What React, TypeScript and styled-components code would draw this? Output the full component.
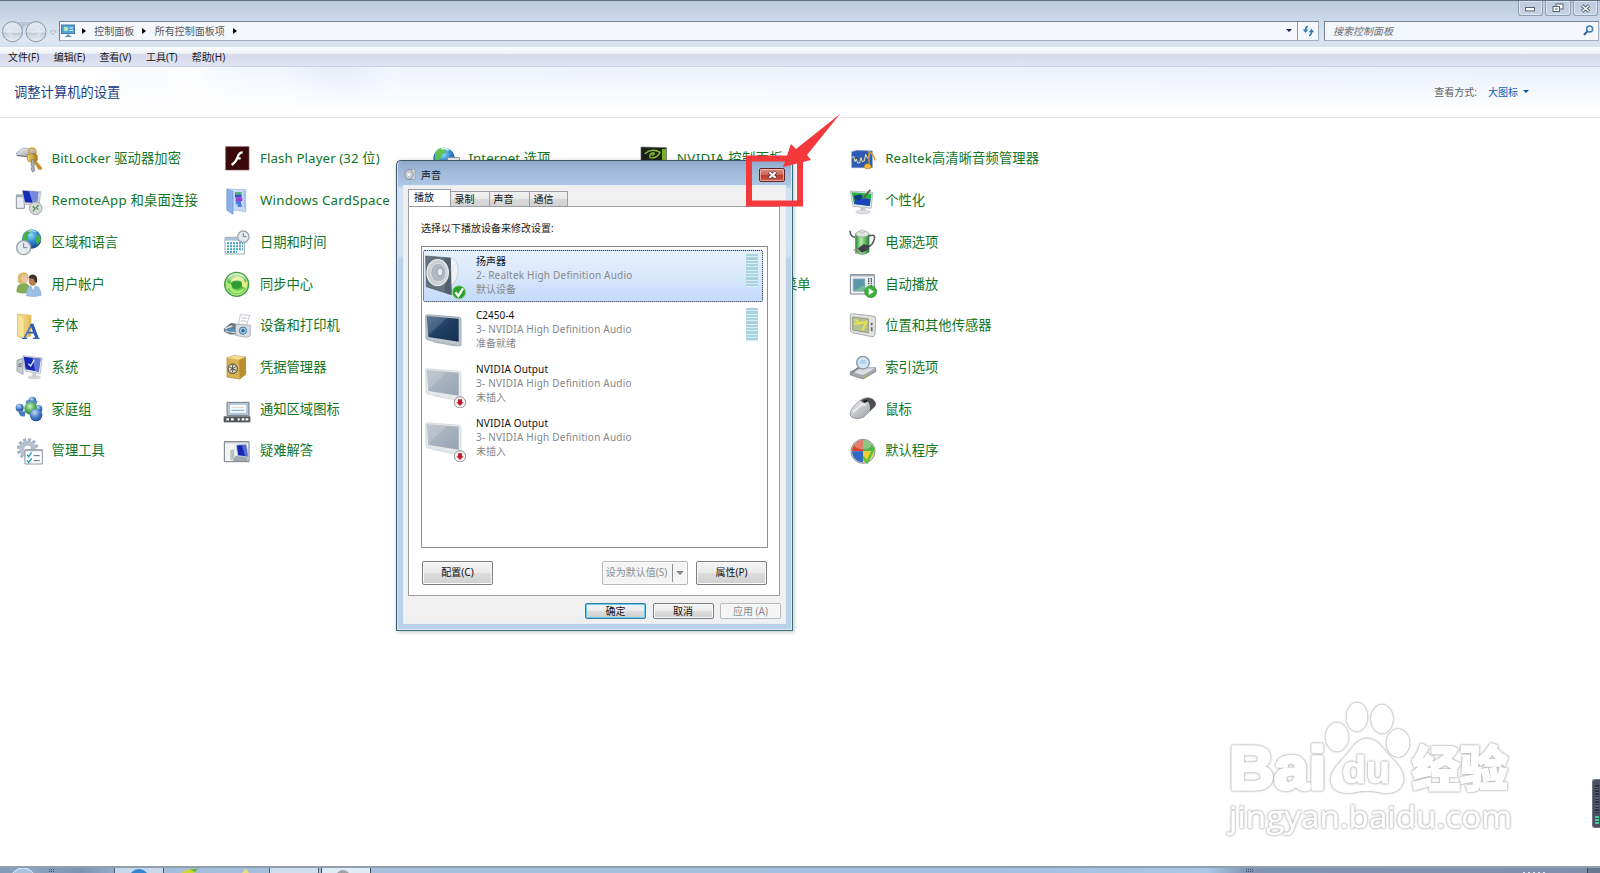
import React from "react";
import styled, { createGlobalStyle, css } from "styled-components";

const cjk = `"Noto Sans", "Noto Sans CJK SC", sans-serif`;

const Global = createGlobalStyle`
  * { box-sizing: border-box; }
  body { margin: 0; background: #fff; font-family: ${cjk}; overflow: hidden; }
`;

const Desktop = styled.div`
  position: relative;
  width: 1600px;
  height: 873px;
  display: flex;
  flex-direction: column;
  background: #fff;
  overflow: hidden;
`;

/* ---------- explorer frame ---------- */
const Frame = styled.div`
  height: 48px;
  border-top: 1px solid #62707f;
  border-bottom: 1px solid #fbfdff;
  background: linear-gradient(#bccbdd, #c5d3e4 25%, #d3dfee 55%, #dce6f2 85%, #d5e1ee 97%);
  display: flex;
  flex-direction: column;
`;
const Caption = styled.div`
  height: 20px;
  display: flex;
  justify-content: flex-end;
  padding-right: 2px;
  gap: 2px;
`;
const CaptionButton = styled.div`
  width: 25.5px;
  height: 15px;
  border: 1px solid #8d9db3;
  border-top: 0;
  border-radius: 0 0 3px 3px;
  box-shadow: inset 0 0 0 1px #dbe5f1;
  display: flex;
  align-items: center;
  justify-content: center;
`;
const AddressRow = styled.div`
  height: 20px;
  display: flex;
`;
const NavSlot = styled.div`
  width: 59px;
  height: 22px;
`;
const AddressBox = styled.div`
  width: 1260px;
  height: 20px;
  border: 1px solid #a3afbf;
  border-top-color: #76818f;
  border-left-color: #76818f;
  background: #f4f7fb;
  display: flex;
  align-items: center;
  font-size: 10px;
  color: #55585e;
  padding: 0 0 1px 1px;
`;
const Crumb = styled.span`
  margin: 0 8.3px 0 8.2px;
  line-height: 14px;
`;
const Arrow = styled.span<{ $first?: boolean }>`
  margin-left: ${(p) => (p.$first ? 7 : 0)}px;
  border-left: 4px solid #000;
  border-top: 3px solid transparent;
  border-bottom: 3px solid transparent;
`;
const DownArrow = styled.span<{ $c?: string; $w?: number }>`
  border-top: ${(p) => (p.$w ?? 3)}px solid ${(p) => p.$c ?? "#111"};
  border-left: ${(p) => (p.$w ?? 3)}px solid transparent;
  border-right: ${(p) => (p.$w ?? 3)}px solid transparent;
`;
const RefreshBox = styled.div`
  width: 21px;
  height: 18px;
  margin-left: 5px;
  border-left: 1px solid #8c98a8;
  display: flex;
  align-items: center;
  justify-content: center;
`;
const Filler = styled.div`
  flex: 1;
`;
const SearchBox = styled(AddressBox)`
  width: 275px;
  margin-left: 5px;
  padding: 0 4px 1px 8px;
  justify-content: space-between;
  font-style: italic;
  color: #6c6f76;
`;
const MenuBar = styled.div`
  height: 19px;
  display: flex;
  align-items: center;
  gap: 13.7px;
  padding-left: 8px;
  border-bottom: 1px solid #cbcfe2;
  background: linear-gradient(#fafbfe, #eef0f8 30%, #d7daeb 36%, #dfe3f2);
  font-size: 10px;
  color: #1a1a1a;
  line-height: 14px;
`;
const MenuItem = styled.span<{ $w: number }>`
  width: ${(p) => p.$w}px;
  white-space: nowrap;
`;
const Header = styled.div`
  height: 51px;
  display: flex;
  align-items: center;
  justify-content: space-between;
  padding: 0 71px 1px 14px;
  border-bottom: 1px solid #e4ebf0;
  background:
    linear-gradient(rgba(255,255,255,0), #fff 90%),
    linear-gradient(65deg, #fff 0 105px, #f7f9fe 135px 165px, #fcfdff 180px 195px, #f5f8fd 210px, #f2f5fd 240px 270px, #e9eefb 310px 340px, #f0f4fd 370px) no-repeat left / 400px 100%,
    linear-gradient(90deg, #f0f4fd, #eef2fc 30%, #eaf0fb);
`;
const Title = styled.div`
  font-size: 13.3px;
  line-height: 18px;
  color: #1b3f87;
`;
const ViewBy = styled.div`
  display: flex;
  align-items: center;
  font-size: 10px;
  line-height: 14px;
  color: #5d6066;
`;
const ViewLink = styled.span`
  color: #0b63b5;
  margin: 0 5px 0 11px;
`;

/* ---------- items grid ---------- */
const Items = styled.div`
  flex: 1;
  display: flex;
  padding: 20px 0 0 15px;
`;
const Column = styled.div`
  width: 208.4px;
  display: flex;
  flex-direction: column;
`;
const Item = styled.div`
  height: 41.72px;
  display: flex;
  align-items: center;
  gap: 8.6px;
  font-size: 13.3px;
  line-height: 18px;
  color: #11751f;
  white-space: nowrap;
  svg { flex: none; }
`;
const Label = styled.span<{ $s?: number }>`
  letter-spacing: ${(p) => p.$s ?? 0}px;
  padding-bottom: 1px;
`;
const Trailing = styled.span`
  margin-left: auto;
  padding: 0 38px 1px 0;
`;

/* ---------- dialog ---------- */
const Dialog = styled.div`
  position: absolute;
  left: 396px;
  top: 160px;
  width: 397px;
  height: 471px;
  border: 1px solid #3c5468;
  border-bottom-color: #35707a;
  border-right-color: #35707a;
  border-radius: 5px 5px 0 0;
  padding: 0 6px 6px;
  display: flex;
  flex-direction: column;
  background: linear-gradient(#94aed0, #a6c0df 3%, #aac4e2 5%, #d3e2f3 6%, #d0e0f2 20%, #b9d1e9 21%, #b9d1e9);
  box-shadow: inset 0 0 0 1px #dceaf6, 1px 1px 4px rgba(0,0,0,.25);
`;
const DialogTitle = styled.div`
  height: 24px;
  flex: none;
  display: flex;
  align-items: center;
  gap: 4px;
  margin: 0 -5px;
  padding: 3px 6px 0 6px;
  border-radius: 4px 4px 0 0;
  background: linear-gradient(#8fa9cb, #9fb9da 40%, #aec6e2);
  font-size: 10px;
  line-height: 14px;
  color: #111;
`;
const CloseButton = styled.div`
  width: 26px;
  height: 14px;
  margin-left: auto;
  border: 1px solid #5e262b;
  border-radius: 2px;
  box-shadow: inset 0 0 0 1px rgba(255,205,190,.65);
  background: linear-gradient(#dd8e83, #cf6558 48%, #b9382b 52%, #cc5f45);
  display: flex;
  align-items: center;
  justify-content: center;
`;
const Client = styled.div`
  flex: 1;
  background: #f0f0f0;
  border: 1px solid #e6eef6;
  display: flex;
  flex-direction: column;
  padding: 3px 5px 0 4px;
`;
const Tabs = styled.div`
  display: flex;
  align-items: flex-end;
  height: 17px;
`;
const Tab = styled.div<{ $active?: boolean; $w: number }>`
  width: ${(p) => p.$w}px;
  height: 15px;
  border: 1px solid #9a9da1;
  border-left-width: 0;
  border-bottom: 0;
  padding-left: 3.5px;
  font-size: 10px;
  line-height: 15px;
  color: #111;
  background: linear-gradient(#f1f1f1, #e8e8e8 50%, #d9d9d9 52%, #d3d3d3);
  ${(p) => p.$active && css`
    height: 18px;
    margin-bottom: -1px;
    padding-left: 5px;
    border-left-width: 1px;
    background: #fff;
  `}
`;
const Panel = styled.div`
  height: 390px;
  border: 1px solid #9b9fa3;
  background: #fff;
  padding: 14px 11px 0 12px;
`;
const Hint = styled.div`
  height: 25px;
  font-size: 10px;
  line-height: 15px;
  color: #222;
`;
const DeviceList = styled.div`
  height: 302px;
  width: 347px;
  border: 1px solid #8c9097;
  border-top-color: #83878e;
  padding: 2.5px 4px 0 1px;
`;
const Device = styled.div<{ $selected?: boolean }>`
  height: 52.2px;
  margin-bottom: 2px;
  border: 1px solid transparent;
  display: flex;
  padding: 3px 4px 0 1px;
  ${(p) => p.$selected && css`
    border: 1px dotted #1c2a40;
    border-radius: 2px;
    background: linear-gradient(#e7f1fd, #d9e8fb 50%, #c3dafb);
  `}
`;
const DeviceText = styled.div`
  margin-left: 9px;
  flex: 1;
  font-size: 10px;
  line-height: 14.2px;
  color: #85878a;
`;
const DeviceLine = styled.div<{ $s?: number; $strong?: boolean }>`
  letter-spacing: ${(p) => p.$s ?? 0}px;
  color: ${(p) => (p.$strong ? "#111" : "inherit")};
`;
const Meter = styled.div`
  width: 12px;
  height: 33px;
  background: repeating-linear-gradient(#a9d2e0 0 2.3px, #dcedf5 2.3px 3.35px);
`;
const PanelButtons = styled.div`
  display: flex;
  margin-top: 13px;
  padding: 0 1px;
`;
const ButtonGroup = styled.div`
  display: flex;
  gap: 8px;
`;
const Button = styled.div<{ $w: number; $h: number; $primary?: boolean; $disabled?: boolean }>`
  border: 1px solid #7b7d80;
  border-radius: 2px;
  background: linear-gradient(#f4f4f4, #ebebeb 48%, #dddddd 52%, #cfcfcf);
  box-shadow: inset 0 0 0 1px #fafafa;
  color: #111;
  font-size: 10px;
  line-height: 13px;
  display: flex;
  align-items: center;
  justify-content: center;
  white-space: nowrap;
  padding-bottom: ${(p) => (p.$h > 20 ? 1 : 0)}px;
  width: ${(p) => p.$w}px;
  height: ${(p) => p.$h}px;
  ${(p) => p.$primary && css`
    border-color: #3a7c9d;
    box-shadow: inset 0 0 0 1px #62cdf0;
  `}
  ${(p) => p.$disabled && css`
    border-color: #b5b7b9;
    background: #f4f4f4;
    color: #8b8d8f;
  `}
`;
const SplitRule = styled.span`
  width: 1px;
  height: 18px;
  background: #8f9193;
  margin: 0 3px 0 5px;
`;
const Footer = styled.div`
  display: flex;
  justify-content: flex-end;
  gap: 6.5px;
  padding: 7px 0 0;
  margin-right: -1px;
`;

/* ---------- overlays ---------- */
const Annotation = styled.svg`
  position: absolute;
  left: 740px;
  top: 106px;
`;
const NavOrbs = styled.svg`
  display: block;
`;
const Watermark = styled.svg`
  position: absolute;
  left: 1220px;
  top: 695px;
  g { filter: drop-shadow(0 0 .8px #aaa) drop-shadow(0 0 .7px #c4c4c4); }
`;
const SideGauge = styled.div`
  position: absolute;
  right: 0;
  top: 779px;
  width: 8px;
  height: 49px;
  border-radius: 3px 0 0 3px;
  background: #4c4f60;
  border: 1px solid #6f7284;
  border-right: 0;
  padding: 5px 1px 3px 2px;
  display: flex;
  flex-direction: column;
  justify-content: space-between;
`;
const GaugeTop = styled.div`
  height: 28px;
  background: repeating-linear-gradient(#2f3240 0 1.5px, #5b5e70 1.5px 2.7px);
`;
const GaugeLit = styled.div`
  height: 8px;
  background: repeating-linear-gradient(#4fc79c 0 2px, #3c5a5c 2px 3px);
`;

/* ---------- taskbar ---------- */
const Taskbar = styled.div`
  height: 7px;
  border-top: 2px solid #929fac;
  background: linear-gradient(90deg, #8299b8 0, #8aa3c2 2%, #7d95b4 5%, #a3bddc 9%, #a6c0de 24%, #a3bfe0 60%, #a9c8e8 75.5%, #7f94b2 78%, #7d8fa9 100%);
`;
const TaskSvg = styled.svg`
  display: block;
`;

type IconProps = { children: React.ReactNode };
const Ico = ({ children }: IconProps) => (
  <svg width="28" height="28" viewBox="0 0 84 84" fill="none">{children}</svg>
);

const GradientSheet = styled.svg`
  position: absolute;
`;

const Defs = () => (
  <GradientSheet width="0" height="0">
    <defs>
      <radialGradient id="globe" cx=".45" cy=".3" r=".75"><stop offset="0" stopColor="#8fdcf5" /><stop offset=".5" stopColor="#2b84cf" /><stop offset="1" stopColor="#123a80" /></radialGradient>
      <radialGradient id="ballBlue" cx=".4" cy=".3" r=".8"><stop offset="0" stopColor="#c3dcf6" /><stop offset=".5" stopColor="#4a7ec8" /><stop offset="1" stopColor="#173c8e" /></radialGradient>
      <radialGradient id="ballGreen" cx=".45" cy=".35" r=".7"><stop offset="0" stopColor="#c9efc4" /><stop offset=".6" stopColor="#49a94c" /><stop offset="1" stopColor="#237a2b" /></radialGradient>
      <linearGradient id="gold" x1="0" x2="1"><stop offset="0" stopColor="#f3d878" /><stop offset="1" stopColor="#a9781b" /></linearGradient>
      <linearGradient id="silver" x1="0" y1="0" x2="1" y2="1"><stop offset="0" stopColor="#f7f8f9" /><stop offset="1" stopColor="#8b9097" /></linearGradient>
      <linearGradient id="folder" x1="0" x2="1"><stop offset="0" stopColor="#fbeeb5" /><stop offset="1" stopColor="#e0b84e" /></linearGradient>
      <linearGradient id="greenCyl" x1="0" x2="1"><stop offset="0" stopColor="#2f8f36" /><stop offset=".4" stopColor="#b5ecab" /><stop offset="1" stopColor="#23842f" /></linearGradient>
      <linearGradient id="sync" x1="0" y1="0" x2="0" y2="1"><stop offset="0" stopColor="#b9e8a2" /><stop offset=".5" stopColor="#4db53e" /><stop offset="1" stopColor="#86de55" /></linearGradient>
      <linearGradient id="tv" x1="0" y1="0" x2="1" y2="1"><stop offset="0" stopColor="#4b6a8d" /><stop offset=".5" stopColor="#1f3d62" /><stop offset="1" stopColor="#15304f" /></linearGradient>
      <linearGradient id="tvOff" x1="0" y1="0" x2="1" y2="1"><stop offset="0" stopColor="#b7c0cb" /><stop offset="1" stopColor="#96a3b3" /></linearGradient>
      <linearGradient id="orb" x1="0" y1="0" x2="0" y2="1"><stop offset="0" stopColor="#e6ebf1" /><stop offset=".5" stopColor="#d9e0e8" /><stop offset=".58" stopColor="#c3ccd6" /><stop offset="1" stopColor="#edf2f6" /></linearGradient>
    </defs>
  </GradientSheet>
);

const Clock = ({ x, y, r }: { x: number; y: number; r: number }) => (
  <g>
    <circle cx={x} cy={y} r={r} fill="#e6ebf1" stroke="#9aa3ae" strokeWidth="4" />
    <path d={`M${x} ${y - r * 0.65}V${y}H${x + r * 0.5}`} stroke="#5d6b7d" strokeWidth="2.5" />
  </g>
);

const icons: Record<string, React.ReactNode> = {
  bitlocker: <Ico>
    <path d="M4 24 24 9 60 12 64 24 40 36 6 32Z" fill="url(#silver)" stroke="#969ca3" strokeWidth="2" />
    <path d="M6 31 38 35 62 24" stroke="#6f757c" strokeWidth="3" />
    <path d="M42 30V18q0-9 9-9t11 9v12" stroke="#d5a52e" strokeWidth="5" />
    <path d="M36 30q12-8 30 0l1 16q-12 10-28 2z" fill="url(#gold)" stroke="#9b741c" strokeWidth="2" />
    <path d="M60 44 82 70 76 74 70 72 56 50Z" fill="#c28f24" stroke="#8f6915" />
    <path d="M50 42 57 46 58 78 52 80 48 72 51 66 48 58Z" fill="#a9afb7" stroke="#6e747c" strokeWidth="2" />
  </Ico>,
  remote: <Ico>
    <path d="M4 24H28V64H4Z" fill="#e9edf1" stroke="#8b939c" strokeWidth="3" /><path d="M6 28H28" stroke="#96a9c4" strokeWidth="5" />
    <path d="M22 10 78 14 72 54 28 52Z" fill="#ced4da" stroke="#aab1b9" strokeWidth="2" />
    <path d="M23 11 70 15 66 48 30 46Z" fill="#1428b4" /><path d="M42 12 70 15 66 46 52 45Z" fill="#8ea4ea" opacity=".8" />
    <circle cx="62" cy="64" r="19" fill="#d7dbd9" stroke="#a3a8a7" strokeWidth="3" />
    <path d="M53 58 60 65 54 73M71 54 64 61 70 68" stroke="#4f8f56" strokeWidth="4" />
  </Ico>,
  region: <Ico>
    <circle cx="50" cy="33" r="29" fill="url(#globe)" />
    <path d="M24 22Q34 6 48 5L44 16 38 20 40 32 34 42 22 36ZM64 24 74 20 78 36 68 50 62 42Z" fill="#46ae4b" />
    <path d="M38 10q14-5 26 2" stroke="#d6f5fb" strokeWidth="4" opacity=".7" />
    <Clock x={26} y={59} r={21} />
  </Ico>,
  users: <Ico>
    <path d="M5 66Q4 40 26 40T44 66Q24 74 5 66Z" fill="#85ad55" stroke="#6b9141" />
    <path d="M8 34Q6 8 26 7 42 8 40 26L34 40H12Z" fill="#d8b767" /><ellipse cx="28" cy="26" rx="9" ry="12" fill="#eac5a1" />
    <path d="M34 77Q33 46 55 46T79 76Q56 84 34 77Z" fill="#9cbfe6" stroke="#7398c4" /><path d="M48 46 55 60 60 46Z" fill="#fff" />
    <ellipse cx="53" cy="32" rx="12" ry="15" fill="#b67d56" /><path d="M40 24Q46 10 60 15 69 22 66 38L60 36 56 26Z" fill="#373333" />
  </Ico>,
  fonts: <Ico>
    <path d="M8 6 48 10V72L24 79 8 72Z" fill="url(#folder)" stroke="#d9bb61" strokeWidth="2" /><path d="M8 6 28 18V80L8 72Z" fill="#f6e299" stroke="#dabb63" strokeWidth="2" />
    <path d="M28 78 50 36" stroke="#4d7ac9" strokeWidth="5" /><path d="M50 36 66 78" stroke="#2d59b0" strokeWidth="10" /><path d="M38 62H60" stroke="#315fb8" strokeWidth="5" /><path d="M22 79H36M54 79H74" stroke="#315fb8" strokeWidth="4" />
  </Ico>,
  system: <Ico>
    <path d="M6 22 24 16V64L6 54Z" fill="#c8cdd2" stroke="#777e86" strokeWidth="2" /><path d="M10 34 20 32M10 40 20 39" stroke="#4f575f" strokeWidth="3" />
    <path d="M24 8 82 15 76 62 30 54Z" fill="#e2e6ea" stroke="#a5acb3" strokeWidth="2" /><path d="M26 11 77 17 71 56 32 49Z" fill="#1526b0" /><path d="M52 14 77 17 71 56 60 54Z" fill="#7d95e2" opacity=".7" />
    <path d="M40 32 47 39 58 20" stroke="#dfe9ff" strokeWidth="4" /><ellipse cx="58" cy="73" rx="19" ry="5" fill="#d5d9dd" stroke="#a5aab0" /><path d="M52 60 64 62 62 72H54Z" fill="#c4c9ce" />
  </Ico>,
  homegroup: <Ico>
    <circle cx="52" cy="17" r="12" fill="url(#ballBlue)" /><path d="M36 16Q30 20 34 32L62 34 68 18Z" fill="#5687cd" />
    <circle cx="14" cy="38" r="12" fill="url(#ballBlue)" /><path d="M10 50Q14 68 30 64L32 48Z" fill="#4a7ac2" />
    <circle cx="70" cy="42" r="12" fill="url(#ballBlue)" /><circle cx="47" cy="40" r="19" fill="url(#ballGreen)" /><circle cx="63" cy="60" r="19" fill="url(#ballBlue)" />
  </Ico>,
  admin: <Ico>
    <circle cx="38" cy="36" r="28" stroke="#a1afbf" strokeWidth="9" strokeDasharray="9 5.66" /><circle cx="38" cy="36" r="19" fill="#dfe5eb" stroke="#b5c1ce" strokeWidth="12" />
    <circle cx="38" cy="36" r="12" fill="#fff" stroke="#8996a5" strokeWidth="2" />
    <path d="M30 38H82V81H30Z" fill="#fbfcfd" stroke="#9097a0" strokeWidth="3" /><path d="M31 40H81" stroke="#a7adb5" strokeWidth="5" />
    <path d="M36 53 41 59 50 46M36 70 41 76 50 64" stroke="#2498c0" strokeWidth="4" /><path d="M56 56H74M56 71H74" stroke="#626b76" strokeWidth="3" />
  </Ico>,
  flash: <Ico>
    <path d="M8 5H78V75H8Z" fill="#3b0709" stroke="#7c5a5c" strokeWidth="2" />
    <path d="M59 22Q48 22 44 36T26 60M40 40H53" stroke="#fff" strokeWidth="7" />
  </Ico>,
  cardspace: <Ico>
    <path d="M12 6 68 8V74L12 66Z" fill="#c5dcf5" stroke="#8db0dc" strokeWidth="2" /><path d="M30 12 60 13V66L34 64Z" fill="#c9dcf7" />
    <path d="M36 18H56" stroke="#39b054" strokeWidth="5" /><path d="M36 22H56V32H36Z" fill="#3d4ec2" /><path d="M38 32H58V42H38Z" fill="#9a3fd0" /><path d="M38 42H54V52H38ZM44 52H56V60H44Z" fill="#4b7be0" />
    <path d="M12 6 30 14V82L12 70Z" fill="#8bb1eb" stroke="#6590d4" strokeWidth="2" /><path d="M68 8 62 12V60L68 74Z" fill="#a4c3ef" />
  </Ico>,
  datetime: <Ico>
    <path d="M6 28H64V78H6Z" fill="#fff" stroke="#9ba6b3" strokeWidth="3" /><path d="M7 30H63V38H7Z" fill="#a9c3d8" />
    <path d="M12 46H60M12 55H60M12 64H60M12 72H42" stroke="#46a3b9" strokeWidth="6" strokeDasharray="6 3" /><Clock x={61} y={26} r={17} />
  </Ico>,
  sync: <Ico>
    <circle cx="41" cy="43" r="36" fill="url(#sync)" stroke="#4a9c44" strokeWidth="4" /><circle cx="41" cy="43" r="32" stroke="#d6f5c4" strokeWidth="2" />
    <path d="M22 38Q26 20 44 20 62 22 66 38L74 34 70 56 52 46 58 40Q52 30 42 30 30 30 22 38Z" fill="#e4ef8a" /><path d="M66 52Q60 70 42 70 24 70 18 54L10 58 10 36 30 46 26 52Q32 62 42 62 58 62 66 52Z" fill="#bdee84" opacity=".85" />
    <ellipse cx="41" cy="44" rx="16" ry="12" fill="#2f9c35" />
    <ellipse cx="41" cy="22" rx="25" ry="12" fill="#fff" opacity=".3" />
  </Ico>,
  printers: <Ico>
    <path d="M52 8 80 10 70 42 46 40Z" fill="#fdfdfd" stroke="#a6adb6" strokeWidth="2" /><path d="M56 18 72 19M54 26 70 28" stroke="#bfc6cf" strokeWidth="3" />
    <path d="M4 50 24 34 46 38V66L20 66 4 58Z" fill="#6f7a85" stroke="#515b65" strokeWidth="2" /><path d="M6 50 28 42M8 57 36 62" stroke="#dde4ea" strokeWidth="4" /><ellipse cx="24" cy="54" rx="13" ry="5" fill="#4e91bd" />
    <path d="M38 36 82 40V72L68 76 38 70Z" fill="#d9dfe6" stroke="#8f98a3" strokeWidth="2" /><circle cx="60" cy="56" r="11" fill="#a1cbe6" stroke="#56758e" strokeWidth="3" /><circle cx="60" cy="56" r="5" fill="#24669b" />
  </Ico>,
  credentials: <Ico>
    <path d="M12 14 34 8 68 12V64L50 78 12 72Z" fill="#d9b352" stroke="#a5802b" strokeWidth="2" /><path d="M12 14 48 20 68 12 34 8Z" fill="#f5df95" /><path d="M48 20 68 12V64L50 78Z" fill="#b98e31" />
    <circle cx="29" cy="47" r="14" fill="#dcdcd6" stroke="#6b6248" strokeWidth="4" /><path d="M29 36V58M19 42 39 52M20 53 38 41" stroke="#57523f" strokeWidth="3" />
  </Ico>,
  notify: <Ico>
    <path d="M12 22H78V62H12Z" fill="#b9c4cf" stroke="#727d88" strokeWidth="3" /><path d="M20 28H71V55H20Z" fill="#f7fbfe" stroke="#92b2d1" strokeWidth="2" /><path d="M26 37H64" stroke="#d9bcae" strokeWidth="2" /><path d="M26 46H64" stroke="#6aa4d8" strokeWidth="3" />
    <path d="M2 64H82V82H2Z" fill="#4d5359" /><path d="M10 73H18M24 73H32M44 73H50M56 73H64M68 73H76" stroke="#fff" strokeWidth="7" />
  </Ico>,
  trouble: <Ico>
    <path d="M4 14H78V74H4Z" fill="#f2f4f6" stroke="#737a82" strokeWidth="3" /><path d="M6 17H76" stroke="#c0c6cc" strokeWidth="4" /><path d="M22 40 34 36V68H22Z" fill="#b9c3be" /><path d="M38 56 74 60V72H30L32 66Z" fill="#9fa9b4" />
    <path d="M40 24 70 22 76 60 44 56Z" fill="#1526b0" stroke="#c1cad5" strokeWidth="3" /><path d="M56 23 70 22 76 60 66 58Z" fill="#7d95e2" opacity=".6" />
  </Ico>,
  internet: <Ico>
    <circle cx="36" cy="40" r="32" fill="url(#globe)" /><path d="M10 22Q22 4 40 10L42 22 30 30 20 50 8 44Z" fill="#63c052" /><path d="M28 12q12-5 22 4" stroke="#d6f5fb" strokeWidth="5" /><path d="M46 38H82V70H46Z" fill="#f3f5f7" stroke="#868d95" strokeWidth="3" />
  </Ico>,
  nvidia: <Ico>
    <path d="M3 6 79 8V80H3Z" fill="#1d211b" stroke="#596052" strokeWidth="2" /><path d="M66 12H78V70H66Z" fill="#7aaf1f" /><path d="M14 26Q36 8 60 22 50 42 30 38 26 24 42 24 44 32 34 30" stroke="#8cc529" strokeWidth="4" />
  </Ico>,
  realtek: <Ico>
    <path d="M8 20 24 16 70 18V68H8Z" fill="#2e59b5" stroke="#8398c9" strokeWidth="2" /><path d="M8 38 14 34 18 50 22 42 26 54 32 54 36 38 40 50 46 48 50 28 56 40 64 26" stroke="#f0e58d" strokeWidth="3" />
    <path d="M60 62V20Q74 26 78 46" stroke="#d99a24" strokeWidth="4" /><ellipse cx="56" cy="64" rx="10" ry="8" fill="#f4c034" stroke="#af7816" strokeWidth="2" />
  </Ico>,
  personal: <Ico>
    <path d="M4 12 72 16 66 64 12 58Z" fill="#e1e5e9" stroke="#9ca4ac" strokeWidth="2" /><path d="M8 16 68 20 62 57 15 51Z" fill="#2ab548" /><path d="M18 40 44 34 64 36 62 57 15 51Z" fill="#1c42c0" /><path d="M14 26 34 22 42 28 34 40 18 40Z" fill="#123b82" />
    <path d="M44 32 64 8" stroke="#4e5f34" strokeWidth="5" /><path d="M34 60 50 61 48 72H36Z" fill="#c3c8cd" /><ellipse cx="42" cy="75" rx="22" ry="6" fill="#dce0e4" stroke="#a5abb1" />
  </Ico>,
  power: <Ico>
    <path d="M20 18V72Q40 86 60 72V18Z" fill="url(#greenCyl)" stroke="#2d7e33" strokeWidth="2" /><ellipse cx="40" cy="18" rx="20" ry="9" fill="#dfe6df" stroke="#8b9a8b" strokeWidth="2" /><ellipse cx="40" cy="10" rx="8" ry="5" fill="#d5dbd8" stroke="#92998f" />
    <path d="M3 8Q4 26 18 28M60 24Q82 16 75 36 70 54 56 56" stroke="#4e565b" strokeWidth="4.5" /><path d="M26 62 44 48 62 54 56 66 38 74Z" fill="#3f4145" /><path d="M28 64 14 66M32 71 18 76" stroke="#94937b" strokeWidth="4" />
  </Ico>,
  autoplay: <Ico>
    <path d="M4 14H76V72H4Z" fill="#eef1f4" stroke="#7c848c" strokeWidth="3" /><path d="M4 17H76" stroke="#a2adb8" strokeWidth="4" /><path d="M12 26H48V64H12Z" fill="#5a97a9" stroke="#c4ced8" strokeWidth="2" /><path d="M12 62 48 44V64H12Z" fill="#73b69b" /><path d="M67 24V50M59 24V44" stroke="#4f565e" strokeWidth="4" strokeDasharray="5 2" />
    <circle cx="65" cy="65" r="18" fill="#3fae3b" stroke="#2c8a31" strokeWidth="2" /><path d="M59 55 75 65 59 75Z" fill="#fff" />
  </Ico>,
  location: <Ico>
    <path d="M4 10Q4 5 10 5L72 12Q80 13 80 20L78 68Q76 76 68 74L10 62Q4 60 4 54Z" fill="#dfe1df" stroke="#888b88" strokeWidth="2" /><path d="M11 15 58 21V62L11 54Z" fill="#b4c291" stroke="#737b6c" strokeWidth="2" /><path d="M16 36 52 30 40 56M18 22 30 32" stroke="#ebe245" strokeWidth="6" /><path d="M68 32V40M68 46V58" stroke="#666967" strokeWidth="5" />
  </Ico>,
  indexing: <Ico>
    <path d="M4 56 28 46 80 44V56L42 78 4 66Z" fill="#a4a9af" stroke="#70767d" strokeWidth="2" /><path d="M6 56 42 66 78 46 40 46Z" fill="#dcdfe2" /><path d="M44 72 50 68" stroke="#c7b833" strokeWidth="5" />
    <path d="M28 44 8 60" stroke="#80868e" strokeWidth="6" /><circle cx="42" cy="29" r="19" fill="#d2e7fa" stroke="#8a929b" strokeWidth="4" /><path d="M32 30H52M34 24H50" stroke="#8fbbe6" strokeWidth="3" />
  </Ico>,
  mouse: <Ico>
    <path d="M4 52Q8 36 32 17 52 2 70 12 84 22 78 34L44 66Q24 76 8 66 1 60 4 52Z" fill="url(#silver)" stroke="#777b80" strokeWidth="2" /><path d="M34 17Q52 4 70 12 84 22 78 34L62 48Q66 28 56 20L46 24Z" fill="#4b4e52" /><path d="M44 20 54 16" stroke="#17191c" strokeWidth="6" /><path d="M12 52 38 28 50 30" stroke="#fff" strokeWidth="6" opacity=".6" />
  </Ico>,
  defaults: <Ico>
    <circle cx="42" cy="43" r="36" fill="#d7dcdf" stroke="#8b9094" strokeWidth="3" /><path d="M42 43V10A33 33 0 0 0 9 43Z" fill="#d9442e" /><path d="M42 43V10A33 33 0 0 1 75 43Z" fill="#57b14a" /><path d="M42 43H9A33 33 0 0 0 42 76Z" fill="#2f69c4" /><path d="M42 43H75A33 33 0 0 1 42 76Z" fill="#f0cc32" /><ellipse cx="42" cy="24" rx="26" ry="13" fill="#fff" opacity=".3" />
    <path d="M42 60 54 76 76 32" stroke="#58c23c" strokeWidth="7" />
  </Ico>,
};

type Entry = [icon: string, label: string, spacing?: number];
const columns: Entry[][] = [
  [["bitlocker", "BitLocker 驱动器加密", 0.08], ["remote", "RemoteApp 和桌面连接", 0.2], ["region", "区域和语言"], ["users", "用户帐户"], ["fonts", "字体"], ["system", "系统"], ["homegroup", "家庭组"], ["admin", "管理工具"]],
  [["flash", "Flash Player (32 位)", 0.1], ["cardspace", "Windows CardSpace", 0.22], ["datetime", "日期和时间"], ["sync", "同步中心"], ["printers", "设备和打印机"], ["credentials", "凭据管理器"], ["notify", "通知区域图标"], ["trouble", "疑难解答"]],
  [["internet", "Internet 选项", 0.1]],
  [["nvidia", "NVIDIA 控制面板", 0.4], ["", ""], ["", ""], ["", "菜单"]],
  [["realtek", "Realtek高清晰音频管理器", 0.1], ["personal", "个性化"], ["power", "电源选项"], ["autoplay", "自动播放"], ["location", "位置和其他传感器"], ["indexing", "索引选项"], ["mouse", "鼠标"], ["defaults", "默认程序"]],
];

const Tv = ({ off }: { off?: boolean }) => (
  <svg width="42" height="46" viewBox="0 0 126 138" fill="none">
    <path d="M2 24Q2 20 8 20L104 28Q108 28 108 36V112L100 114 10 96Q4 96 3 90Z" fill={off ? "#e6e9ec" : "#bfc6cd"} stroke={off ? "#ccd1d6" : "#8d969f"} strokeWidth="2" />
    <path d="M5 24 101 32V101L10 87Z" fill={off ? "url(#tvOff)" : "url(#tv)"} />
    <path d="M5 24 66 29 12 80 8 80Z" fill="#fff" opacity={off ? 0.15 : 0.12} />
    <path d="M24 100 92 113" stroke={off ? "#dde1e5" : "#aeb6be"} strokeWidth="5" />
    {off && <><circle cx="105" cy="121" r="17" fill="#f2f2f2" stroke="#8f9194" strokeWidth="3" /><path d="M105 132 94 121H99V112H111V121H116Z" fill="#c01e2b" /></>}
  </svg>
);

const Speaker = () => (
  <svg width="42" height="46" viewBox="0 0 126 138" fill="none">
    <path d="M76 10Q100 18 99 50T76 96Z" fill="#eef2f6" stroke="#bcc6d0" strokeWidth="2" />
    <path d="M2 6 76 12 79 122 4 98Z" fill="#66727e" stroke="#4d5964" strokeWidth="2" />
    <path d="M58 11 76 12 79 122 60 116Z" fill="#50606e" />
    <ellipse cx="38" cy="56" rx="32" ry="39" fill="#c9ced3" stroke="#e8ebee" strokeWidth="4" /><ellipse cx="40" cy="56" rx="23" ry="28" fill="#b0b7be" stroke="#dfe3e6" strokeWidth="3" /><ellipse cx="45" cy="54" rx="9" ry="12" fill="#e6e9eb" stroke="#7f8993" strokeWidth="2" />
    <circle cx="102" cy="115" r="20" fill="#2aa12a" stroke="#9bd595" strokeWidth="3" /><path d="M91 115 100 126 114 103" stroke="#fff" strokeWidth="7" />
  </svg>
);

const devices = [
  { name: "扬声器", sub: "2- Realtek High Definition Audio", state: "默认设备", icon: <Speaker />, meter: true, selected: true },
  { name: "C2450-4", sub: "3- NVIDIA High Definition Audio", state: "准备就绪", icon: <Tv />, meter: true },
  { name: "NVIDIA Output", sub: "3- NVIDIA High Definition Audio", state: "未插入", icon: <Tv off /> },
  { name: "NVIDIA Output", sub: "3- NVIDIA High Definition Audio", state: "未插入", icon: <Tv off /> },
];

export default function App() {
  return (
    <Desktop>
      <Global />
      <Defs />
      <Frame>
        <Caption>
          <CaptionButton><svg width="10" height="8"><rect x=".5" y="3.5" width="9" height="3.4" fill="#fff" stroke="#596473" /></svg></CaptionButton>
          <CaptionButton><svg width="12" height="10" fill="#f7f9fb" stroke="#596473"><rect x="4" y="1" width="7" height="5" /><rect x="1" y="3.5" width="6.5" height="5" /><path d="M3 6H5.5" /></svg></CaptionButton>
          <CaptionButton><svg width="11" height="9"><path d="M2 1.5 9 7.5M9 1.5 2 7.5" stroke="#596473" strokeWidth="3.6" /><path d="M2.3 1.8 8.7 7.2M8.7 1.8 2.3 7.2" stroke="#fff" strokeWidth="1.5" /></svg></CaptionButton>
        </Caption>
        <AddressRow>
          <NavSlot>
            <NavOrbs width="59" height="22" fill="none">
              <path d="M13 1H36V5Q24 3 22 8Z" fill="#b8c5d3" />
              <circle cx="12.5" cy="10.7" r="10" fill="url(#orb)" stroke="#8996a5" /><circle cx="36" cy="10.7" r="10" fill="url(#orb)" stroke="#8996a5" />
              <path d="M18 11H8M12 7 8 11 12 15M31 11H41M37 7 41 11 37 15" stroke="#f4f7fa" strokeWidth="2" opacity=".45" />
              <path d="M50 10H56L53 13.5Z" fill="#f2f5f9" stroke="#a9b6c4" />
            </NavOrbs>
          </NavSlot>
          <AddressBox>
            <svg width="14" height="14" fill="none"><rect x=".5" y="1" width="13" height="8.5" fill="#4ba3d9" stroke="#4b7da8" /><circle cx="5" cy="5" r="2.3" fill="#bfe3b5" /><path d="M8.5 4H12M8.5 6.5H12" stroke="#e8f6ff" /><path d="M4 13 7 10 11 13Z" fill="#6694bb" /></svg>
            <Arrow $first /><Crumb>控制面板</Crumb><Arrow /><Crumb>所有控制面板项</Crumb><Arrow />
            <Filler />
            <DownArrow $c="#15204a" />
            <RefreshBox>
              <svg width="13" height="12" fill="none"><path d="M6 1.5Q3.5 1.5 3.5 6M7 10.5Q9.5 10.5 9.5 6" stroke="#2f7abf" strokeWidth="1.6" /><path d="M.8 4.6H6.2L3.5 8ZM6.8 7.2H12.2L9.5 3.8Z" fill="#2f7abf" /></svg>
            </RefreshBox>
          </AddressBox>
          <SearchBox>
            <span>搜索控制面板</span>
            <svg width="11" height="11" fill="none"><circle cx="6.6" cy="4" r="3" stroke="#3f7bb0" strokeWidth="1.6" /><path d="M4.3 6.4 1 10" stroke="#35608f" strokeWidth="2" /></svg>
          </SearchBox>
        </AddressRow>
      </Frame>
      <MenuBar>
        <MenuItem $w={32}>文件(F)</MenuItem><MenuItem $w={32}>编辑(E)</MenuItem><MenuItem $w={33}>查看(V)</MenuItem><MenuItem $w={32}>工具(T)</MenuItem><MenuItem $w={34}>帮助(H)</MenuItem>
      </MenuBar>
      <Header>
        <Title>调整计算机的设置</Title>
        <ViewBy>查看方式:<ViewLink>大图标</ViewLink><DownArrow $c="#0b4f9b" /></ViewBy>
      </Header>
      <Items>
        {columns.map((col, i) => (
          <Column key={i}>
            {col.map(([icon, label, spacing], j) =>
              icon ? (
                <Item key={j}>{icons[icon]}<Label $s={spacing}>{label}</Label></Item>
              ) : (
                <Item key={j}>{label && <Trailing>{label}</Trailing>}</Item>
              )
            )}
          </Column>
        ))}
      </Items>
      <Taskbar>
        <TaskSvg width="1600" height="5" fill="none">
          <circle cx="23" cy="13" r="13" fill="#a9c3dd" stroke="#e3edf6" />
          <path d="M49 1.5H55M49 3.5H55" stroke="#46536a" strokeDasharray="1 1" />
          <rect x="114.5" y="-.5" width="49" height="12" fill="#c9d8ea" stroke="#4a5a70" /><circle cx="139" cy="11" r="10" fill="#2f86d2" />
          <path d="M181 5Q187 0 198 1L194 5Z" fill="#cfd637" /><path d="M190 1.5 198 .5 195 4Z" fill="#57b949" />
          <path d="M242 5 246 .5 249 5Z" fill="#e8e07a" />
          <rect x="269.5" y="-.5" width="49" height="12" fill="#d0dded" stroke="#4a5a70" />
          <rect x="321.5" y="-.5" width="49" height="12" fill="#dfecf5" stroke="#3c4a5e" /><circle cx="343" cy="9" r="7" fill="#9ca3a8" />
          <path d="M1246 1.5H1253M1246 3.5H1253" stroke="#46536a" strokeDasharray="1 1" />
          <path d="M1523 4.5H1546" stroke="#dfe7f2" strokeDasharray="2 3" />
          <rect x="1587.5" y="-.5" width="14" height="8" fill="#68788f" stroke="#3d4a5e" />
        </TaskSvg>
      </Taskbar>

      <Dialog>
        <DialogTitle>
          <svg width="13" height="13" fill="none"><path d="M6 1 11 2V11L6 12Z" fill="#e9edf1" stroke="#9ba5b0" /><ellipse cx="5" cy="6.5" rx="4.3" ry="5" fill="#c6ccd2" stroke="#858d96" /><circle cx="5" cy="6.5" r="1.6" fill="#f5f6f7" /></svg>
          声音
          <CloseButton><svg width="9" height="8"><path d="M1 1 8 7M8 1 1 7" stroke="#5f3a40" strokeWidth="3.4" /><path d="M1.4 1.2 7.6 6.8M7.6 1.2 1.4 6.8" stroke="#fff" strokeWidth="2" /></svg></CloseButton>
        </DialogTitle>
        <Client>
          <Tabs>
            <Tab $active $w={43}>播放</Tab><Tab $w={39}>录制</Tab><Tab $w={40}>声音</Tab><Tab $w={38}>通信</Tab>
          </Tabs>
          <Panel>
            <Hint>选择以下播放设备来修改设置:</Hint>
            <DeviceList>
              {devices.map((d, i) => (
                <Device key={i} $selected={d.selected}>
                  {d.icon}
                  <DeviceText>
                    <DeviceLine $strong $s={d.name.startsWith("NVIDIA") ? 0.15 : 0}>{d.name}</DeviceLine>
                    <DeviceLine $s={0.21}>{d.sub}</DeviceLine>
                    <DeviceLine>{d.state}</DeviceLine>
                  </DeviceText>
                  {d.meter && <Meter />}
                </Device>
              ))}
            </DeviceList>
            <PanelButtons>
              <Button $w={71} $h={24}>配置(C)</Button>
              <Filler />
              <ButtonGroup>
                <Button $w={86} $h={24} $disabled>设为默认值(S)<SplitRule /><DownArrow $c="#85878a" $w={4} /></Button>
                <Button $w={71} $h={24}>属性(P)</Button>
              </ButtonGroup>
            </PanelButtons>
          </Panel>
          <Footer>
            <Button $w={61} $h={16} $primary>确定</Button>
            <Button $w={61} $h={16}>取消</Button>
            <Button $w={61} $h={16} $disabled>应用 (A)</Button>
          </Footer>
        </Client>
      </Dialog>

      <Annotation width="110" height="110" fill="none">
        <rect x="9" y="52.5" width="51" height="45" stroke="#f4383b" strokeWidth="6" />
        <path d="M43 61 51 38 56 43 100 8 67 49 71 54Z" fill="#f4383b" />
      </Annotation>

      <Watermark width="310" height="150" fill="#fff" stroke="#fff" strokeWidth="1">
        <g>
          <ellipse cx="117" cy="42" rx="11" ry="14" /><ellipse cx="137" cy="22" rx="10" ry="14" /><ellipse cx="162" cy="24" rx="10.5" ry="14" /><ellipse cx="178" cy="48" rx="11" ry="13.5" />
          <path d="M147 44C158 44 162 54 170 62 178 70 184 77 183 86 181 97 170 99 160 97 150 95 143 95 134 97 122 99 112 96 111 85 111 76 119 69 126 61 133 53 137 44 147 44Z" />
        </g>
        <g strokeWidth="3.5" strokeLinejoin="round">
          <text x="9" y="93.5" fontFamily="Liberation Sans" fontWeight="bold" fontSize="61" textLength="97" lengthAdjust="spacingAndGlyphs">Bai</text>
        </g>
        <g>
          <text x="122" y="88" fontFamily="Liberation Sans" fontSize="38" fontWeight="bold" textLength="48" lengthAdjust="spacingAndGlyphs">du</text>
        </g>
        <g strokeWidth="2">
          <text x="192" y="91" fontFamily="Noto Sans CJK SC" fontWeight="900" fontSize="48" textLength="96" lengthAdjust="spacingAndGlyphs">经验</text>
        </g>
        <g strokeWidth=".5">
          <text x="9" y="133" fontFamily="Open Sans" fontSize="31" fontWeight="500" textLength="283" lengthAdjust="spacingAndGlyphs">jingyan.baidu.com</text>
        </g>
      </Watermark>
      <SideGauge><GaugeTop /><GaugeLit /></SideGauge>
    </Desktop>
  );
}
